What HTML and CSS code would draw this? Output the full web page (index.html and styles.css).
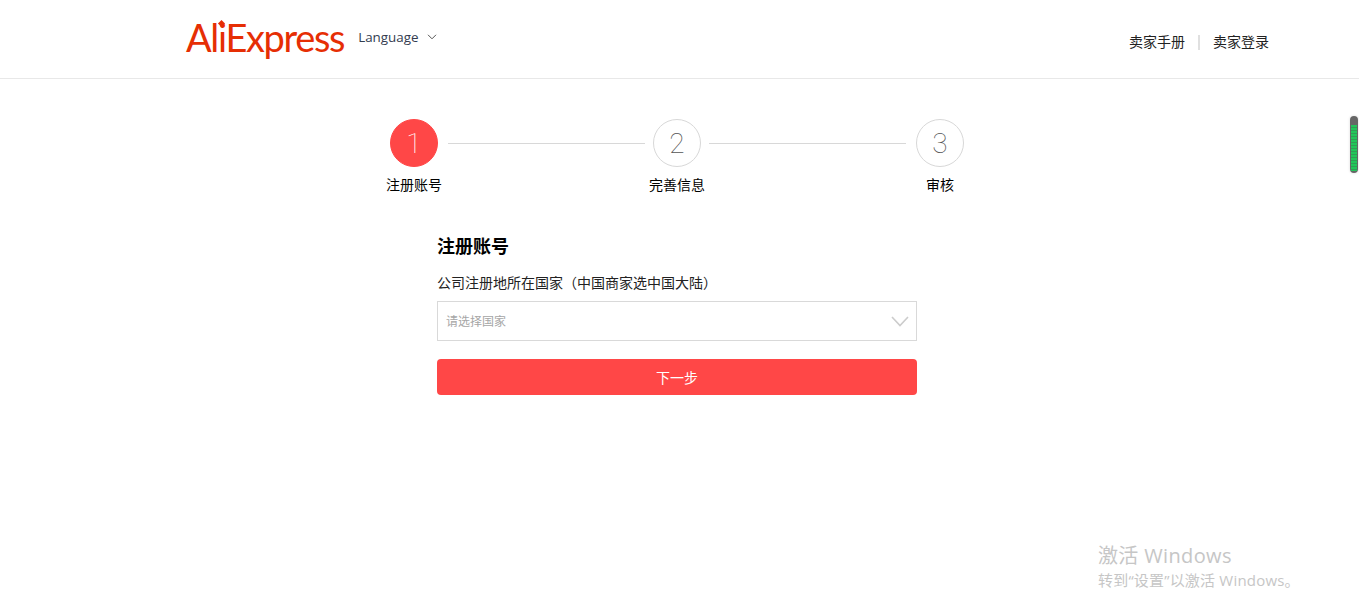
FILE: index.html
```html
<!DOCTYPE html>
<html lang="zh-CN">
<head>
    <meta charset="UTF-8">
    <meta name="viewport" content="width=device-width, initial-scale=1.0">
    <title>AliExpress 卖家入驻</title>
    <link rel="stylesheet" href="styles.css">
</head>
<body>

    <header class="header">
        <div class="brand">
            <a class="logo" href="#">AliExpress<span class="logo-star"></span></a>
            <a class="language" href="#">
                Language
                <svg class="language-arrow" width="10" height="6" viewBox="0 0 10 6"><path d="M1 .8 5 4.8 9 .8" fill="none" stroke="#555" stroke-width="1"/></svg>
            </a>
        </div>
        <nav class="header-links">
            <a class="header-link" href="#">卖家手册</a>
            <span class="header-divider"></span>
            <a class="header-link" href="#">卖家登录</a>
        </nav>
    </header>

    <main class="main">
        <div class="steps">
            <div class="step step-active">
                <div class="step-num">1</div>
                <div class="step-name">注册账号</div>
            </div>
            <div class="step-line step-line-first"></div>
            <div class="step">
                <div class="step-num">2</div>
                <div class="step-name">完善信息</div>
            </div>
            <div class="step-line step-line-second"></div>
            <div class="step">
                <div class="step-num">3</div>
                <div class="step-name">审核</div>
            </div>
        </div>

        <form class="form">
            <h2 class="form-title">注册账号</h2>
            <label class="form-label">公司注册地所在国家（中国商家选中国大陆）</label>
            <div class="select">
                <span class="select-text">请选择国家</span>
                <svg width="18" height="11" viewBox="0 0 18 11"><path d="M1 1 9 9.5 17 1" fill="none" stroke="#ccc" stroke-width="1.6"/></svg>
            </div>
            <button class="next-btn" type="button">下一步</button>
        </form>
    </main>

    <div class="scroll-widget"><div class="scroll-widget-bars"></div></div>

    <div class="activate">
        <div class="activate-title">激活 Windows</div>
        <div class="activate-text">转到“设置”以激活 Windows。</div>
    </div>

</body>
</html>
```

FILE: styles.css
```css
* {
    box-sizing: border-box;
}

html, body {
    height: 100%;
}

body {
    margin: 0;
    font-family: "Open Sans", "Noto Sans CJK SC", sans-serif;
    color: #000;
    background-color: #fff;
    overflow: hidden;
}

a {
    text-decoration: none;
}

.header {
    display: flex;
    justify-content: space-between;
    height: 79px;
    padding: 0 90px 0 186px;
    border-bottom: 1px solid #e8e8e8;
}

.brand {
    display: flex;
    align-items: flex-start;
}

.logo {
    position: relative;
    margin-top: 12px;
    font-family: "Lato", sans-serif;
    font-size: 38px;
    line-height: 50px;
    letter-spacing: -1.35px;
    color: #e62e04;
}

.logo-star {
    position: absolute;
    left: 33px;
    top: 9px;
    width: 5px;
    height: 5px;
    background-color: #e62e04;
    transform: rotate(45deg);
}

.language {
    display: flex;
    align-items: center;
    margin: 27px 0 0 14px;
    height: 20px;
    font-size: 13.4px;
    color: #333c4f;
}

.language-arrow {
    margin-left: 8px;
}

.header-links {
    display: flex;
    align-items: center;
    height: 20px;
    margin-top: 32px;
}

.header-link {
    font-size: 14px;
    line-height: 20px;
    color: #222;
}

.header-divider {
    width: 2px;
    height: 15px;
    margin: 0 13px;
    background-color: #e0e0e0;
}

.main {
    padding: 40px 5px 0 0;
}

.steps {
    display: flex;
    width: 586px;
    margin: 0 auto;
}

.step {
    width: 60px;
    flex: none;
    text-align: center;
}

.step-num {
    width: 48px;
    height: 48px;
    margin: 0 auto;
    border: 1px solid #d8d8d8;
    border-radius: 50%;
    font-family: "Roboto", sans-serif;
    font-size: 28px;
    font-weight: 100;
    line-height: 48px;
    color: #555;
}

.step-active .step-num {
    border-color: #ff4747;
    background-color: #ff4747;
    color: #fff;
}

.step-name {
    margin-top: 8px;
    font-size: 14px;
    line-height: 20px;
    color: #000;
}

.step-line {
    flex: 1;
    height: 1px;
    margin-top: 24px;
    background-color: #d8d8d8;
}

.step-line-first {
    margin-left: 4px;
    margin-right: 2px;
}

.step-line-second {
    margin-left: 2px;
    margin-right: 4px;
}

.form {
    display: flex;
    flex-direction: column;
    width: 480px;
    margin: 38px auto 0;
}

.form-title {
    margin: 0;
    font-size: 18px;
    font-weight: 700;
    line-height: 26px;
    color: #000;
}

.form-label {
    margin-top: 14px;
    font-size: 14px;
    line-height: 20px;
    color: #222;
}

.select {
    display: flex;
    align-items: center;
    justify-content: space-between;
    height: 40px;
    margin-top: 8px;
    padding: 0 7px 0 8px;
    border: 1px solid #d9d9d9;
}

.select-text {
    font-size: 12px;
    color: #a6a6a6;
}

.next-btn {
    height: 36px;
    margin-top: 18px;
    padding: 0;
    border: none;
    border-radius: 4px;
    font-family: inherit;
    font-size: 14px;
    color: #fff;
    background-color: #ff4747;
}

.scroll-widget {
    position: absolute;
    left: 1350px;
    top: 116px;
    width: 8px;
    height: 57px;
    padding: 9px 1px 2px;
    border-radius: 4px;
    background-color: #666;
    box-shadow: 0 0 3px rgba(0, 0, 0, .15);
}

.scroll-widget-bars {
    height: 100%;
    background: repeating-linear-gradient(to bottom, #22c55a 0, #22c55a 2px, #2f9e55 2px, #2f9e55 3px);
}

.activate {
    position: absolute;
    left: 1098px;
    top: 543px;
    color: #c6c6c6;
}

.activate-title {
    font-size: 20px;
    line-height: 26px;
    letter-spacing: .35px;
}

.activate-text {
    margin-top: 1px;
    font-size: 15px;
    line-height: 20px;
    letter-spacing: .2px;
}
```
